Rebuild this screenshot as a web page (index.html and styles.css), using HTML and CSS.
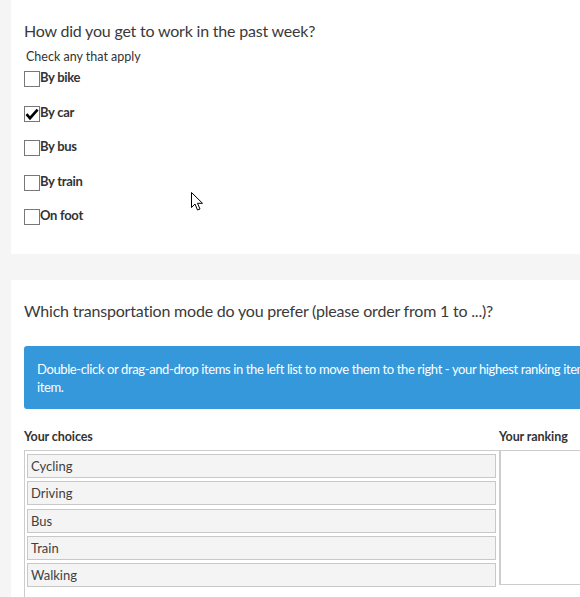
FILE: index.html
```html
<!DOCTYPE html>
<html>
<head>
<meta charset="utf-8">
<link rel="stylesheet" href="styles.css">
</head>
<body>
<div class="page">
  <section class="card card-one">
    <h2 class="question">How did you get to work in the past week?</h2>
    <div class="hint">Check any that apply</div>
    <div class="options">
      <label class="option"><span class="box"></span><span class="label-text">By bike</span></label>
      <label class="option"><span class="box"><svg class="tick" width="14" height="14" viewBox="0 0 14 14"><path d="M1.5 7.2 L5 11.2 L12.6 2.6" fill="none" stroke="#000" stroke-width="2.6" stroke-linecap="butt" stroke-linejoin="miter"/></svg></span><span class="label-text">By car</span></label>
      <label class="option"><span class="box"></span><span class="label-text">By bus</span></label>
      <label class="option"><span class="box"></span><span class="label-text">By train</span></label>
      <label class="option"><span class="box"></span><span class="label-text">On foot</span></label>
    </div>
  </section>
  <section class="card card-two">
    <h2 class="question">Which transportation mode do you prefer (please order from 1 to ...)?</h2>
    <div class="banner"><span class="banner-line">Double-click or drag-and-drop items in the left list to move them to the right - your highest ranking item should be on the top right, your lowest ranking</span> item.</div>
    <div class="ranking">
      <div class="col col-left">
        <div class="col-title">Your choices</div>
        <div class="list list-left">
          <div class="item">Cycling</div>
          <div class="item">Driving</div>
          <div class="item">Bus</div>
          <div class="item">Train</div>
          <div class="item">Walking</div>
        </div>
      </div>
      <div class="col col-right">
        <div class="col-title">Your ranking</div>
        <div class="list list-right"></div>
      </div>
    </div>
  </section>
  <svg class="cursor" width="13" height="20" viewBox="0 0 13 20"><path d="M0.5 0.5 L0.5 15.5 L4 12 L6.5 18 L9 17 L6.5 11.3 L11.5 11.3 Z" fill="#fff" stroke="#000" stroke-width="1" stroke-linejoin="miter"/></svg>
</div>
</body>
</html>
```
FILE: styles.css
```css
html, body {
  margin: 0;
  padding: 0;
  background: #f5f5f5;
  overflow: hidden;
}
.page {
  position: relative;
  width: 580px;
  height: 597px;
  overflow: hidden;
  padding-left: 11px;
  box-sizing: border-box;
  font-family: Lato, "Liberation Sans", sans-serif;
  color: #404040;
}
.card {
  background: #fff;
  width: 780px;
  box-sizing: border-box;
  padding-left: 13px;
}
.card-one {
  padding-top: 20px;
  height: 254px;
}
.card-two {
  margin-top: 26px;
  padding-top: 20px;
  height: 400px;
}
.question {
  margin: 0;
  font-size: 16px;
  font-weight: normal;
  line-height: 22px;
  letter-spacing: -0.2px;
  color: #3a3a3a;
}
.hint {
  margin-top: 7px;
  padding-left: 2px;
  font-size: 12.5px;
  line-height: 16px;
  color: #333;
}
.options {
  display: flex;
  flex-direction: column;
  gap: 18.5px;
  margin-top: 6px;
}
.option {
  display: flex;
  align-items: flex-start;
  height: 16px;
  font-size: 13px;
  font-weight: bold;
  line-height: 13px;
  color: #333;
}
.box {
  width: 14px;
  height: 14px;
  border: 1px solid #777;
  display: flex;
  align-items: center;
  justify-content: center;
}
.tick {
  display: block;
}
.label-text {
  letter-spacing: -0.3px;
  margin-top: 0;
}
.banner {
  margin-top: 24px;
  width: 600px;
  box-sizing: border-box;
  background: #3498db;
  color: #fff;
  border-radius: 3px;
  padding: 14px 13px 13px;
  font-size: 13px;
  line-height: 18px;
  letter-spacing: -0.38px;
  overflow: hidden;
}
.banner-line {
  white-space: nowrap;
}
.ranking {
  display: flex;
  margin-top: 20px;
}
.col-title {
  font-size: 12.5px;
  font-weight: bold;
  line-height: 16px;
  color: #333;
  margin-bottom: 5px;
  letter-spacing: -0.1px;
}
.col-left {
  width: 475px;
}
.list-left {
  border: 1px solid #ccc;
  border-right: none;
  padding: 3px 3px 8px 2px;
  display: flex;
  flex-direction: column;
  gap: 3.3px;
  height: 140px;
}
.item {
  border: 1px solid #c8c8c8;
  background: #f4f4f4;
  height: 22px;
  line-height: 22px;
  padding-left: 3px;
  font-size: 13px;
  color: #404040;
}
.col-right {
  width: 200px;
}
.list-right {
  border: 1px solid #ccc;
  border-left: 2px solid #ccc;
  height: 133px;
}
.cursor {
  position: absolute;
  left: 191px;
  top: 192px;
}
```
